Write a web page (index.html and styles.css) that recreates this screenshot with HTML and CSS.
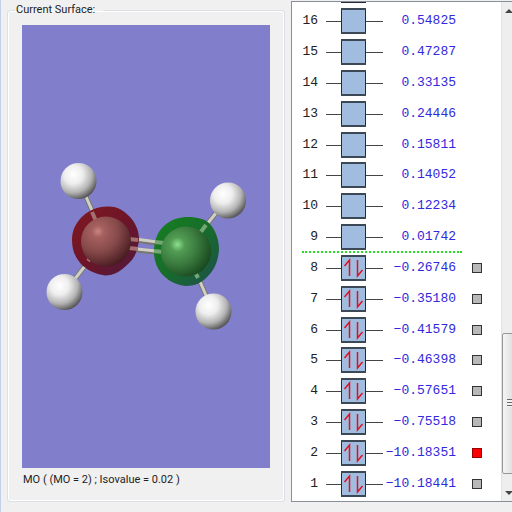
FILE: index.html
```html
<!DOCTYPE html>
<html lang="en">
<head>
    <meta charset="UTF-8">
    <title>Surfaces</title>
    <link rel="stylesheet" href="styles.css">
</head>
<body>
    <main class="window">
        <fieldset class="surface">
            <legend>Current Surface:</legend>
            <svg class="view" viewBox="22 25 248 443" role="img" aria-label="Ethylene molecule">
                <defs>
                    <radialGradient id="hydrogen" cx="0.36" cy="0.32" r="0.74">
                        <stop offset="0" stop-color="#ffffff"/>
                        <stop offset="0.35" stop-color="#eeeeee"/>
                        <stop offset="0.68" stop-color="#b4b4b4"/>
                        <stop offset="1" stop-color="#484848"/>
                    </radialGradient>
                    <radialGradient id="redAtom" cx="0.34" cy="0.3" r="0.8">
                        <stop offset="0" stop-color="#c88680"/>
                        <stop offset="0.15" stop-color="#a4605e"/>
                        <stop offset="0.5" stop-color="#874a4a"/>
                        <stop offset="0.8" stop-color="#5c2a2e"/>
                        <stop offset="1" stop-color="#3a141a"/>
                    </radialGradient>
                    <radialGradient id="greenAtom" cx="0.33" cy="0.36" r="0.8">
                        <stop offset="0" stop-color="#8ee08e"/>
                        <stop offset="0.18" stop-color="#529c54"/>
                        <stop offset="0.5" stop-color="#3a7a3e"/>
                        <stop offset="0.8" stop-color="#205426"/>
                        <stop offset="1" stop-color="#103a16"/>
                    </radialGradient>
                    <linearGradient id="redLobe" x1="0" y1="0" x2="1" y2="1">
                        <stop offset="0" stop-color="#821822"/>
                        <stop offset="0.5" stop-color="#6d1527"/>
                        <stop offset="1" stop-color="#4c1a40"/>
                    </linearGradient>
                    <linearGradient id="greenLobe" x1="0" y1="0" x2="1" y2="1">
                        <stop offset="0" stop-color="#168020"/>
                        <stop offset="0.5" stop-color="#176c2a"/>
                        <stop offset="1" stop-color="#1e4d50"/>
                    </linearGradient>
                </defs>
                <g fill="none" stroke="#77776f" stroke-width="5">
                    <path d="M84 192L97 222M71 284L92 257M220 208L200 233M208 300L195 270M128 239L165 244M128 249L165 253"/>
                </g>
                <g fill="none" stroke="#cfcfc8" stroke-width="3">
                    <path d="M84 192L97 222M71 284L92 257M220 208L200 233M208 300L195 270M128 238L165 243M128 248L165 252"/>
                </g>
                <path fill="url(#redLobe)" d="M107 206.500C118 206 124 211 129 216C135 222 139 230 139 239C138 250 135 258 128 264C121 271 114 275.500 105 275.500C95 274 87 270 81 264C75 257 72 250 72 240C72 229 77 221 84 215C90 210 97 207 107 206.500Z"/>
                <path fill="url(#greenLobe)" d="M188 217C198 217 205 219 210 224C216 231 219 240 219 250C218 261 215 269 208 276C202 283 194 286 186 286C175 285 167 280 161 273C156 266 153.500 259 154 249C155 238 158 231 165 225C172 219 180 217 188 217Z"/>
                <g fill="none" stroke-width="4">
                    <path stroke="#a4706f" d="M92 212L96 221M88 261L92 256M129 239L138 240M129 248L138 249"/>
                    <path stroke="#75a775" d="M206 225L200 233M198 278L194 270M155 242L164 243M154 251L163 252"/>
                </g>
                <circle cx="106" cy="241.500" r="25" fill="url(#redAtom)"/>
                <circle cx="186" cy="251.500" r="25" fill="url(#greenAtom)"/>
                <g fill="url(#hydrogen)">
                    <circle cx="78.500" cy="181" r="18"/>
                    <circle cx="64.500" cy="292" r="18"/>
                    <circle cx="228" cy="200.500" r="18"/>
                    <circle cx="213.500" cy="311.500" r="18"/>
                </g>
            </svg>
            <p class="caption">MO ( (MO = 2) ; Isovalue = 0.02 )</p>
        </fieldset>

        <section class="orbitals">
            <svg class="symbols" aria-hidden="true">
                <symbol id="empty" viewBox="0 0 57 26">
                    <path d="M0 13.500H57" stroke="#444"/>
                    <rect x="15.500" y="1" width="24" height="24" fill="#a0bddf" stroke="#222c38"/>
                    <path d="M15 1H40M15 25H40" stroke="#3c4856" stroke-width="2"/>
                </symbol>
                <symbol id="filled" viewBox="0 0 57 26">
                    <use href="#empty" width="57" height="26"/>
                    <path d="M23.500 21V5L18.500 11M31.500 5V21L36.500 15" fill="none" stroke="#e01024" stroke-width="1.500"/>
                </symbol>
            </svg>
            <div class="list">
                <div class="cut-box"></div>
                <table>
                    <tbody id="levels"></tbody>
                </table>
            </div>
            <div class="scrollbar">
                <button aria-label="Scroll up"><svg width="17" height="17"><path d="M3 11L7 7L11 11Z" fill="#444"/></svg></button>
                <div class="track"><div class="thumb"><i></i></div></div>
                <button aria-label="Scroll down"><svg width="17" height="17"><path d="M3 7H11L7 11Z" fill="#444"/></svg></button>
            </div>
        </section>
    </main>

    <script>
        const energias = [
            '0.54825', '0.47287', '0.33135', '0.24446', '0.15811', '0.14052', '0.12234', '0.01742',
            '−0.26746', '−0.35180', '−0.41579', '−0.46398', '−0.57651', '−0.75518', '−10.18351', '−10.18441'
        ];
        const levels = document.getElementById('levels');

        levels.innerHTML = energias.map((energia, i) => {
            const mo = 16 - i;
            const filled = mo <= 8;
            const box = filled ? `<input type="checkbox" aria-label="MO ${mo}" ${mo === 2 ? 'checked' : ''}>` : '';
            return `<tr class="${mo === 8 ? 'homo' : ''}">
                <th scope="row">${mo}</th>
                <td class="level"><svg width="57" height="26"><use href="#${filled ? 'filled' : 'empty'}"/></svg></td>
                <td class="energy">${energia}</td>
                <td class="pick">${box}</td>
            </tr>`;
        }).join('');
    </script>
</body>
</html>
```
FILE: styles.css
```css
* {
    box-sizing: border-box;
}

body {
    margin: 0;
    background: #f0f0f0;
    font-family: Roboto, "Liberation Sans", Arial, sans-serif;
    font-size: 11px;
    color: #222;
}

.window {
    display: grid;
    grid-template-columns: 278fr 221fr;
    grid-template-rows: 100%;
    gap: 6px;
    height: 100vh;
    padding: 1px 0 10px 6px;
    border-left: 1px solid #c3d0e8;
    overflow: hidden;
}

.surface {
    display: flex;
    flex-direction: column;
    min-width: 0;
    margin: 2px 0 0;
    padding: 0 14px 14px;
    border: 1px solid #dcdfe4;
    border-radius: 3px;
    box-shadow: inset 0 0 0 1px #fff;
}

.surface legend {
    margin-left: -7px;
    padding: 0 8px 0 1px;
    line-height: 14px;
}

.view {
    display: block;
    width: 100%;
    margin-top: 8px;
    background: #817fcb;
}

.caption {
    margin: 5px 0 0 1px;
    line-height: 14px;
    white-space: nowrap;
}

.orbitals {
    display: flex;
    min-width: 0;
    background: #fff;
    border: 1px solid #8a8f99;
    border-right: 0;
}

.symbols {
    position: absolute;
    width: 0;
    height: 0;
}

.list {
    flex: 1;
    display: flex;
    flex-direction: column;
    padding-bottom: 2px;
}

/* bottom edge of the level scrolled out of view */
.cut-box {
    width: 25px;
    height: 4px;
    margin-left: 49px;
    border-top: 1px solid #222c38;
}

table {
    flex: 1;
    display: flex;
}

tbody {
    flex: 1;
    display: grid;
    grid-auto-rows: 1fr;
}

tr {
    position: relative;
    display: grid;
    grid-template-columns: 26px 57px 65px 1fr;
    column-gap: 8px;
    align-items: center;
}

th,
td {
    padding: 0;
    font: 13px/16px "Liberation Mono", "Courier New", monospace;
}

th {
    text-align: right;
}

.level svg {
    display: block;
}

.energy {
    display: flex;
    justify-content: flex-end;
    color: #3228dc;
}

.pick {
    display: flex;
    padding-left: 8px;
}

.homo::before {
    content: "";
    position: absolute;
    top: -2px;
    left: 10px;
    width: 160px;
    border-top: 2px dotted #28dc28;
}

input[type="checkbox"] {
    appearance: none;
    width: 10px;
    height: 10px;
    margin: 0;
    background: #b8b8b8;
    border: 1px solid #333;
}

input[type="checkbox"]:checked {
    background: #f00;
    border-color: #900;
}

.scrollbar {
    display: flex;
    flex-direction: column;
    width: 11px;
    background: #eee;
    border-left: 1px solid #e2e2e2;
    overflow: hidden;
}

.scrollbar button {
    width: 17px;
    height: 17px;
    padding: 0;
    border: 0;
    background: none;
}

.scrollbar svg {
    display: block;
}

.track {
    flex: 1;
    display: flex;
    flex-direction: column;
    justify-content: flex-end;
    padding-bottom: 10px;
}

.thumb {
    display: flex;
    align-items: center;
    width: 17px;
    height: 31%;
    padding-left: 4px;
    border: 1px solid #979797;
    border-radius: 2px;
    background: linear-gradient(90deg, #f5f5f5, #d4d4d8);
}

.thumb i {
    width: 8px;
    height: 8px;
    background: repeating-linear-gradient(#666 0 1px, #f4f4f4 1px 3px);
}
```
